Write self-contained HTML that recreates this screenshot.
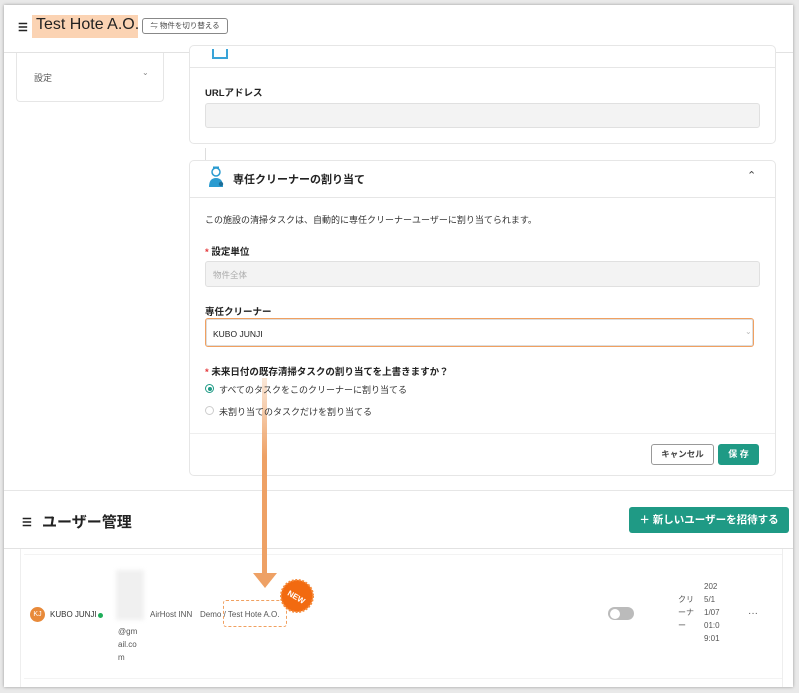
<!DOCTYPE html>
<html><head><meta charset="utf-8"><style>
*{box-sizing:border-box;margin:0;padding:0}
body{width:799px;height:693px;overflow:hidden;background:#e9e9e9;font-family:"Liberation Sans","Noto Sans CJK JP",sans-serif;color:#222;position:relative}
.frame{position:absolute;left:4px;top:5px;width:789px;height:682px;background:#fff;box-shadow:0 0 3px rgba(0,0,0,.35);overflow:hidden}
.abs{position:absolute}
.card{position:absolute;border:1px solid #e6e6e6;border-radius:5px;background:#fff}
.lbl{font-size:9.5px;font-weight:bold;color:#222}
.inp{position:absolute;background:#f3f3f3;border:1px solid #e0e0e0;border-radius:3px}
.s{font-size:9px;color:#333}
.star{color:#e4393c}
.top{z-index:2}
</style></head><body>
<div class="frame">
 <div class="abs" style="left:0;top:0;width:789px;height:48px;border-bottom:1px solid #e2e2e2;background:#fff"></div>
 <div class="abs" style="left:14px;top:16px;font-size:11px;font-weight:bold">☰</div>
 <div class="abs" style="left:28px;top:10px;height:23px;width:106px;background:#fbd3b3"></div>
 <div class="abs" style="left:32px;top:11px;font-size:16px;color:#222">Test Hote A.O.</div>
 <div class="abs" style="left:138px;top:13px;width:86px;height:16px;border:1px solid #888;border-radius:3px;font-size:7.5px;color:#444;line-height:14px;text-align:center">⇋ 物件を切り替える</div>
 <div class="card" style="left:12px;top:48px;width:148px;height:49px;border-top:none;border-radius:0 0 4px 4px"></div>
 <div class="abs s" style="left:30px;top:66px;color:#555">設定</div>
 <div class="abs" style="left:138px;top:63px;font-size:8px;color:#888">⌄</div>
 <div class="card" style="left:185px;top:40px;width:587px;height:99px"></div>
 <div class="abs" style="left:208px;top:44px;width:16px;height:10px;border:2px solid #3aa4d8;border-top:none"></div>
 <div class="abs" style="left:186px;top:62px;width:585px;height:1px;background:#e6e6e6"></div>
 <div class="abs lbl" style="left:201px;top:80px">URLアドレス</div>
 <div class="inp" style="left:201px;top:98px;width:555px;height:25px"></div>
 <div class="abs" style="left:201px;top:143px;width:1px;height:12px;background:#ddd"></div>
 <div class="card" style="left:185px;top:155px;width:587px;height:316px"></div>
 <svg class="abs" style="left:203px;top:161px" width="18" height="22" viewBox="0 0 18 22"><circle cx="9" cy="6" r="4" fill="none" stroke="#2a9bd0" stroke-width="1.5"/><rect x="6" y="0.5" width="6" height="2" fill="#2a9bd0"/><path d="M2 21 Q2 12 9 12 Q16 12 16 21 Z" fill="#2a9bd0"/><circle cx="14" cy="18" r="2.2" fill="#1c6f99"/></svg>
 <div class="abs" style="left:229px;top:166px;font-size:11px;font-weight:bold">専任クリーナーの割り当て</div>
 <div class="abs" style="left:743px;top:164px;font-size:11px;color:#444">⌃</div>
 <div class="abs" style="left:186px;top:192px;width:585px;height:1px;background:#e6e6e6"></div>
 <div class="abs s" style="left:201px;top:208px">この施設の清掃タスクは、自動的に専任クリーナーユーザーに割り当てられます。</div>
 <div class="abs lbl" style="left:201px;top:239px"><span class="star">*</span> 設定単位</div>
 <div class="inp" style="left:201px;top:256px;width:555px;height:26px"></div>
 <div class="abs" style="left:209px;top:264px;font-size:8.5px;color:#aaa">物件全体</div>
 <div class="abs lbl" style="left:201px;top:299px">専任クリーナー</div>
 <div class="abs" style="left:201px;top:313px;width:549px;height:29px;border:1.5px solid #f0a060;border-radius:3px;background:#fff;box-shadow:inset 0 0 0 1px #ddd"></div>
 <div class="abs" style="left:209px;top:324px;font-size:8.5px;color:#222">KUBO JUNJI</div>
 <div class="abs" style="left:741px;top:322px;font-size:8px;color:#bbb">⌄</div>
 <div class="abs lbl" style="left:201px;top:359px"><span class="star">*</span> 未来日付の既存清掃タスクの割り当てを上書きますか？</div>
 <div class="abs" style="left:201px;top:379px;width:9px;height:9px;border:1px solid #1e9a85;border-radius:50%"><div style="margin:1.5px;width:4px;height:4px;border-radius:50%;background:#1e9a85"></div></div>
 <div class="abs s top" style="left:215px;top:378px">すべてのタスクをこのクリーナーに割り当てる</div>
 <div class="abs" style="left:201px;top:401px;width:9px;height:9px;border:1px solid #ccc;border-radius:50%"></div>
 <div class="abs s top" style="left:215px;top:400px">未割り当てのタスクだけを割り当てる</div>
 <div class="abs" style="left:186px;top:428px;width:585px;height:1px;background:#eee"></div>
 <div class="abs" style="left:647px;top:439px;width:63px;height:21px;border:1px solid #999;border-radius:3px;font-size:8.5px;font-weight:bold;color:#444;text-align:center;line-height:19px">キャンセル</div>
 <div class="abs" style="left:714px;top:439px;width:41px;height:21px;background:#1f9a85;border-radius:3px;font-size:9px;font-weight:bold;color:#fff;text-align:center;line-height:21px">保 存</div>
 <div class="abs" style="left:0;top:485px;width:789px;height:1px;background:#e6e6e6"></div>
 <div class="abs" style="left:18px;top:511px;font-size:11px;font-weight:bold">☰</div>
 <div class="abs" style="left:38px;top:506px;font-size:15px;font-weight:bold">ユーザー管理</div>
 <div class="abs" style="left:625px;top:502px;width:160px;height:26px;background:#1f9a85;border-radius:3px;color:#fff;font-size:10.5px;font-weight:bold;line-height:26px;text-align:center">＋ 新しいユーザーを招待する</div>
 <div class="abs" style="left:0;top:543px;width:789px;height:1px;background:#e2e2e2"></div>
 <div class="abs" style="left:16px;top:544px;width:1px;height:140px;background:#eee"></div>
 <div class="abs" style="left:20px;top:549px;width:758px;height:1px;background:#f3f3f3"></div>
 <div class="abs" style="left:20px;top:673px;width:758px;height:1px;background:#f3f3f3"></div>
 <div class="abs" style="left:26px;top:602px;width:15px;height:15px;border-radius:50%;background:#e88a3a;color:#fff;font-size:7px;text-align:center;line-height:15px">KJ</div>
 <div class="abs" style="left:46px;top:605px;font-size:8px;color:#333">KUBO JUNJI</div>
 <div class="abs" style="left:94px;top:608px;width:5px;height:5px;border-radius:50%;background:#1fae5a"></div>
 <div class="abs" style="left:112px;top:565px;width:28px;height:50px;background:#f0f0f0;filter:blur(2px)"></div>
 <div class="abs" style="left:114px;top:620px;font-size:8px;color:#555;line-height:13px">@gm<br>ail.co<br>m</div>
 <div class="abs" style="left:146px;top:605px;font-size:8px;color:#555">AirHost INN</div>
 <div class="abs" style="left:196px;top:605px;font-size:8px;color:#555">Demo / Test Hote A.O.</div>
 <div class="abs" style="left:219px;top:595px;width:64px;height:27px;border:1.5px dashed #f0a060;border-radius:3px"></div>
 <svg class="abs" style="left:275px;top:573px" width="36" height="36" viewBox="0 0 36 36"><circle cx="18" cy="18" r="16" fill="#f26a10" stroke="#f58a3a" stroke-width="2" stroke-dasharray="2 1.5"/><text x="18" y="22" font-size="8" font-weight="bold" fill="#fff" text-anchor="middle" transform="rotate(30 18 18)" font-family="Liberation Sans">NEW</text></svg>
 <div class="abs" style="left:258px;top:373px;width:5px;height:198px;background:linear-gradient(rgba(240,180,130,.3),#eea165 40%,#eea165)"></div>
 <svg class="abs" style="left:249px;top:568px" width="24" height="16"><polygon points="0,0 24,0 12,15" fill="#eea165"/></svg>
 <div class="abs" style="left:604px;top:602px;width:26px;height:13px;border-radius:7px;background:#bbb"><div style="margin:1.5px;width:10px;height:10px;border-radius:50%;background:#fff"></div></div>
 <div class="abs" style="left:674px;top:588px;font-size:8px;color:#555;line-height:13px">クリ<br>ーナ<br>ー</div>
 <div class="abs" style="left:700px;top:575px;font-size:8px;color:#555;line-height:13px">202<br>5/1<br>1/07<br>01:0<br>9:01</div>
 <div class="abs" style="left:744px;top:603px;font-size:10px;color:#555">···</div>
 <div class="abs" style="left:778px;top:544px;width:1px;height:140px;background:#eee"></div>
</div>
</body></html>
